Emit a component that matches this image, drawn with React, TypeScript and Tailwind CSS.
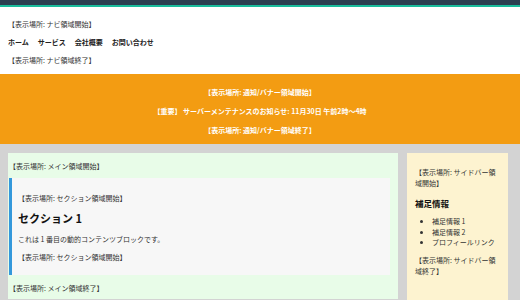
export default function App() {
  return (
    <div
      className="min-h-[300px] bg-[#d3d3d3] text-[7px] leading-[10px] text-[#333]"
      style={{ fontFamily: '"Noto Sans CJK JP", "Noto Sans", sans-serif' }}
    >
      <header className="h-[7px] border-b-2 border-[#1abc9c] bg-[#2c3e50]" />
      <nav className="flex flex-col gap-[8px] bg-white px-[8px] pb-[9px] pt-[12px]">
        <p>【表示場所: ナビ領域開始】</p>
        <ul className="flex gap-[9px] font-bold text-[#222]">
          <li>ホーム</li>
          <li>サービス</li>
          <li>会社概要</li>
          <li>お問い合わせ</li>
        </ul>
        <p>【表示場所: ナビ領域終了】</p>
      </nav>
      <div className="flex flex-col items-center gap-[9px] bg-[#f39c12] pb-[9px] pt-[13px] font-bold text-white">
        <p>【表示場所: 通知/バナー領域開始】</p>
        <p>【重要】 サーバーメンテナンスのお知らせ: 11月30日 午前2時〜4時</p>
        <p>【表示場所: 通知/バナー領域終了】</p>
      </div>
      <div className="flex items-start gap-[9px] pl-[8px] pr-[12px] pt-[9px]">
        <main className="w-[390px] bg-[#e8fce8] pb-[6px] pl-[1px] pt-[8px]">
          <p>【表示場所: メイン領域開始】</p>
          <section className="mr-[8px] mt-[7px] border-l-[3px] border-[#3498db] bg-[#f7f7f7] px-[6px] pb-[13px] pt-[15px]">
            <p>【表示場所: セクション領域開始】</p>
            <h2 className="mt-[8px] text-[11px] font-bold leading-[14px] text-[#111]">セクション 1</h2>
            <p className="mt-[9px]">これは 1 番目の動的コンテンツブロックです。</p>
            <p className="mt-[8px]">【表示場所: セクション領域開始】</p>
          </section>
          <p className="mt-[8px]">【表示場所: メイン領域終了】</p>
        </main>
        <aside className="min-h-[147px] w-[101px] bg-[#fdf3d0] px-[8px] pt-[14px]">
          <p className="leading-[11px]">【表示場所: サイドバー領域開始】</p>
          <h3 className="mt-[8px] text-[8.5px] font-bold leading-[12px] text-[#111]">補足情報</h3>
          <ul className="mt-[7px] list-disc pl-[17px] leading-[10.5px]">
            <li>補足情報 1</li>
            <li>補足情報 2</li>
            <li>プロフィールリンク</li>
          </ul>
          <p className="mt-[7px] leading-[11px]">【表示場所: サイドバー領域終了】</p>
        </aside>
      </div>
    </div>
  );
}
